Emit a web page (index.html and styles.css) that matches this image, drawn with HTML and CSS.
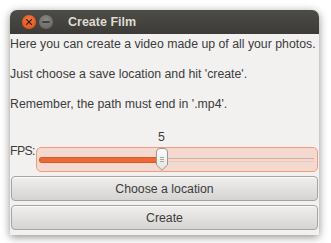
FILE: index.html
```html
<!DOCTYPE html>
<html>
<head>
<meta charset="utf-8">
<link rel="stylesheet" href="styles.css">
</head>
<body>
<div class="window">
  <div class="titlebar">
    <div class="controls">
      <span class="btn close"><svg width="14" height="14" viewBox="0 0 14 14"><path d="M4.6 4.6 L9.4 9.4 M9.4 4.6 L4.6 9.4" stroke="#3a1a0a" stroke-width="1.3" stroke-linecap="round"/></svg></span>
      <span class="btn min"><svg width="14" height="14" viewBox="0 0 14 14"><path d="M4 7 H10" stroke="#2e2d2a" stroke-width="1.6" stroke-linecap="round"/></svg></span>
    </div>
    <div class="title">Create Film</div>
  </div>
  <div class="content">
    <p class="line">Here you can create a video made up of all your photos.</p>
    <p class="line">Just choose a save location and hit 'create'.</p>
    <p class="line">Remember, the path must end in '.mp4'.</p>
    <div class="value-row"><span class="value">5</span></div>
    <div class="fps-row">
      <span class="fps-label">FPS:</span>
      <div class="slider">
        <div class="track">
          <div class="fill"></div>
          <div class="rest"></div>
        </div>
        <svg class="handle" width="12" height="23" viewBox="0 0 12 23">
          <defs><linearGradient id="hg" x1="0" y1="0" x2="0" y2="1"><stop offset="0" stop-color="#ffffff"/><stop offset="1" stop-color="#e2e1de"/></linearGradient></defs>
          <path d="M0.5 4 Q0.5 0.5 4 0.5 H8 Q11.5 0.5 11.5 4 V17 L6 22.3 L0.5 17 Z" fill="url(#hg)" stroke="#9a9890"/>
          <path d="M4 9.5 H8 M4 11.5 H8 M4 13.5 H8" stroke="#aaa8a1" stroke-width="1"/>
        </svg>
      </div>
    </div>
    <button class="pbtn">Choose a location</button>
    <button class="pbtn">Create</button>
  </div>
</div>
</body>
</html>
```
FILE: styles.css
```css
html, body { margin: 0; padding: 0; }
body {
  width: 331px; height: 243px;
  background: #ffffff;
  font-family: "Liberation Sans", Arial, sans-serif;
  overflow: hidden;
}
.window {
  margin: 10px 0 0 10px;
  width: 309px;
  height: 225px;
  background: #f2f1f0;
  border-radius: 7px 7px 0 0;
  box-shadow: 0 2px 8px rgba(0,0,0,0.45);
  display: flex;
  flex-direction: column;
  overflow: hidden;
}
.titlebar {
  height: 24px;
  flex: none;
  background: linear-gradient(#4d4c47, #3c3b37);
  display: flex;
  align-items: center;
  padding-left: 12px;
}
.controls { display: flex; gap: 3px; }
.btn {
  width: 14px; height: 14px; border-radius: 50%;
  display: flex;
}
.close { background: radial-gradient(circle at 50% 35%, #f4773e, #df4a16); }
.min { background: radial-gradient(circle at 50% 35%, #8b8a85, #5f5e5a); }
.title {
  margin-left: 15px;
  color: #dfdbd2;
  font-weight: bold;
  font-size: 12.5px;
}
.content {
  display: flex;
  flex-direction: column;
  font-size: 12.3px;
  color: #3c3c3c;
}
.line {
  margin: 0;
  height: 30px;
  line-height: 20px;
  white-space: nowrap;
}
.value-row {
  height: 13px;
  line-height: 13px;
  margin-top: 7px;
  position: relative;
}
.value { position: absolute; left: 148px; }
.fps-row { display: flex; align-items: flex-start; margin-top: 3px; padding-right: 1px; }
.fps-label { width: 26px; flex: none; line-height: 9px; letter-spacing: -0.6px; white-space: nowrap; }
.slider {
  position: relative;
  flex: 1;
  height: 23px;
  border: 1px solid #ef9d7a;
  border-radius: 5px;
  background: #f3d9cf;
  display: flex;
  align-items: center;
  padding: 0 3px;
}
.track { display: flex; width: 100%; height: 4px; }
.fill { width: 118px; background: #ec6a35; border-radius: 2px 0 0 2px; box-shadow: 0 0 0 1px #d55a28; }
.rest { flex: 1; border-top: 1px solid #d0ada0; border-bottom: 1px solid #e8c8bc; }
.handle {
  position: absolute;
  left: 119px; top: 0px;
}
.pbtn {
  margin: 4px 0 0 1px;
  height: 25px;
  width: 307px;
  border: 1px solid #a5a4a0;
  border-radius: 4px;
  background: linear-gradient(#f0efed, #d5d4d2);
  font-family: "Liberation Sans", Arial, sans-serif;
  font-size: 12.3px;
  color: #3c3c3c;
  padding: 0;
  box-shadow: inset 0 1px 0 #fbfbfa;
}
```
